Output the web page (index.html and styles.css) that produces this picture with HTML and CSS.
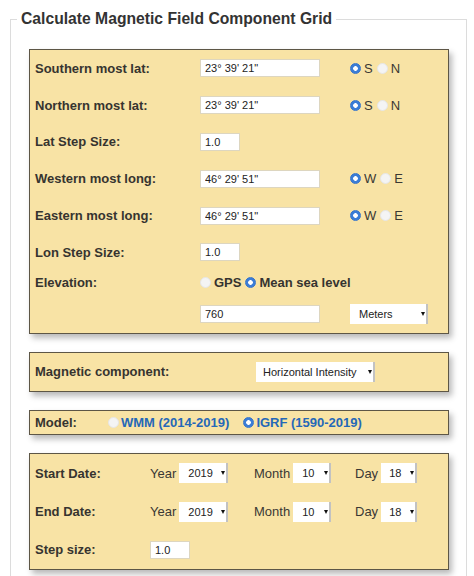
FILE: index.html
```html
<!DOCTYPE html>
<html lang="en">
<head>
<meta charset="utf-8">
<title>Calculate Magnetic Field Component Grid</title>
<link rel="stylesheet" href="styles.css">
</head>
<body>
<fieldset class="grid-form">
  <legend class="title">Calculate Magnetic Field Component Grid</legend>

  <div class="panel panel-coords">
    <div class="row">
      <span class="lbl">Southern most lat:</span>
      <input class="txt txt-wide" type="text" value="23° 39' 21&quot;">
      <span class="opts">
        <label class="opt"><input type="radio" name="slat" checked>S</label>
        <label class="opt"><input type="radio" name="slat">N</label>
      </span>
    </div>
    <div class="row">
      <span class="lbl">Northern most lat:</span>
      <input class="txt txt-wide" type="text" value="23° 39' 21&quot;">
      <span class="opts">
        <label class="opt"><input type="radio" name="nlat" checked>S</label>
        <label class="opt"><input type="radio" name="nlat">N</label>
      </span>
    </div>
    <div class="row">
      <span class="lbl">Lat Step Size:</span>
      <input class="txt txt-small" type="text" value="1.0">
    </div>
    <div class="row">
      <span class="lbl">Western most long:</span>
      <input class="txt txt-wide" type="text" value="46° 29' 51&quot;">
      <span class="opts">
        <label class="opt"><input type="radio" name="wlon" checked>W</label>
        <label class="opt"><input type="radio" name="wlon">E</label>
      </span>
    </div>
    <div class="row">
      <span class="lbl">Eastern most long:</span>
      <input class="txt txt-wide" type="text" value="46° 29' 51&quot;">
      <span class="opts">
        <label class="opt"><input type="radio" name="elon" checked>W</label>
        <label class="opt"><input type="radio" name="elon">E</label>
      </span>
    </div>
    <div class="row">
      <span class="lbl">Lon Step Size:</span>
      <input class="txt txt-small" type="text" value="1.0">
    </div>
    <div class="row row-short">
      <span class="lbl">Elevation:</span>
      <span class="opts opts-elev">
        <label class="opt opt-bold"><input type="radio" name="elev">GPS</label>
        <label class="opt opt-bold"><input type="radio" name="elev" checked>Mean sea level</label>
      </span>
    </div>
    <div class="row row-last">
      <span class="lbl"></span>
      <input class="txt txt-wide" type="text" value="760">
      <span class="sel sel-units"><select><option>Meters</option><option>Feet</option></select></span>
    </div>
  </div>

  <div class="panel">
    <div class="row row-comp">
      <span class="lbl lbl-comp">Magnetic component:</span>
      <span class="sel sel-comp"><select><option>Horizontal Intensity</option></select></span>
    </div>
  </div>

  <div class="panel">
    <div class="row row-model">
      <span class="lbl lbl-model">Model:</span>
      <span class="opts opts-model">
        <label class="opt opt-link"><input type="radio" name="model">WMM (2014-2019)</label>
        <label class="opt opt-link"><input type="radio" name="model" checked>IGRF (1590-2019)</label>
      </span>
    </div>
  </div>

  <div class="panel panel-dates">
    <div class="row row-date">
      <span class="lbl lbl-date">Start Date:</span>
      <span class="dgroup dgroup-year">Year <span class="sel sel-year"><select><option>2019</option></select></span></span>
      <span class="dgroup dgroup-month">Month <span class="sel sel-month"><select><option>10</option></select></span></span>
      <span class="dgroup dgroup-day">Day <span class="sel sel-day"><select><option>18</option></select></span></span>
    </div>
    <div class="row row-date">
      <span class="lbl lbl-date">End Date:</span>
      <span class="dgroup dgroup-year">Year <span class="sel sel-year"><select><option>2019</option></select></span></span>
      <span class="dgroup dgroup-month">Month <span class="sel sel-month"><select><option>10</option></select></span></span>
      <span class="dgroup dgroup-day">Day <span class="sel sel-day"><select><option>18</option></select></span></span>
    </div>
    <div class="row row-date">
      <span class="lbl lbl-date">Step size:</span>
      <input class="txt txt-small" type="text" value="1.0">
    </div>
  </div>
</fieldset>
</body>
</html>
```

FILE: styles.css
```css
body {
  margin: 0;
  background: #fff;
  color: #333;
  font-family: "Liberation Sans", Arial, sans-serif;
}

.grid-form {
  margin: 9px 0 0 10px;
  width: 457px;
  box-sizing: border-box;
  border: 1px solid #dcdcdc;
  padding: 20px 17px 20px 18px;
  min-width: 0;
}

.title {
  font-size: 15.7px;
  font-weight: bold;
  line-height: 20px;
  padding: 0 4px;
  margin-left: -12px;
  color: #333;
}

.panel {
  background: #f8e3a5;
  border: 1px solid #5d5646;
  box-shadow: 3px 4px 6px rgba(0, 0, 0, 0.28);
  padding: 0 5px;
  margin-bottom: 18px;
}
.panel:last-child {
  margin-bottom: 0;
}

.row {
  display: flex;
  align-items: center;
  height: 36.8px;
}
.row-short { height: 24.4px; }
.row-last { height: 37.8px; }
.row-comp { height: 38px; }
.row-model { height: 23px; }
.row-date { height: 38.4px; }

.lbl {
  width: 165px;
  flex-shrink: 0;
  font-size: 13px;
  font-weight: bold;
  color: #363430;
}
.lbl-comp { width: 221px; }
.lbl-model { width: 73px; }
.lbl-date { width: 115px; }

.txt {
  box-sizing: border-box;
  height: 18px;
  margin: 0;
  padding: 0 4px;
  border: 1px solid #ddd6c0;
  background: #fff;
  color: #222;
  font: 11px "Liberation Sans", Arial, sans-serif;
}
.txt-wide { width: 120px; }
.txt-small { width: 40px; }

.opts {
  display: flex;
  align-items: center;
  gap: 4px;
  margin-left: 30px;
  font-size: 13px;
  color: #3a3834;
}
.opts-elev {
  margin-left: 0;
  gap: 4px;
}
.opts-model {
  margin-left: 0;
  gap: 14px;
}

.opt {
  display: flex;
  align-items: center;
  gap: 3px;
}
.opt-bold {
  font-weight: bold;
  color: #363430;
}
.opt-link {
  font-weight: bold;
  color: #2568b8;
  gap: 2px;
}

.opt input {
  -webkit-appearance: none;
  appearance: none;
  box-sizing: border-box;
  width: 11px;
  height: 11px;
  margin: 0;
  border-radius: 50%;
  border: 1px solid #e6e6e6;
  background: #f4f4f4;
}
.opt input:checked {
  border: 1px solid #3574cc;
  background: radial-gradient(circle at center, #fff 0, #fff 2px, #3b7dd6 2.6px);
}

.sel {
  position: relative;
  display: inline-flex;
}
.sel select {
  -webkit-appearance: none;
  appearance: none;
  box-sizing: border-box;
  height: 20px;
  margin: 0;
  padding: 0 0 0 8px;
  border: 0;
  border-right: 2px solid #c2c2c2;
  border-radius: 0;
  background: #fff;
  color: #222;
  font: 11px "Liberation Sans", Arial, sans-serif;
}
.sel::after {
  content: "";
  position: absolute;
  right: 3px;
  top: 8px;
  border-left: 2.5px solid transparent;
  border-right: 2.5px solid transparent;
  border-top: 4px solid #111;
  pointer-events: none;
}
.sel-units {
  margin-left: 30px;
}
.sel-units select { width: 78px; padding-left: 9px; }
.sel-comp select { width: 119px; padding-left: 7px; }
.sel-year select { width: 49px; padding-left: 9px; }
.sel-month select { width: 38px; padding-left: 9px; }
.sel-day select { width: 36px; padding-left: 8px; }

.dgroup {
  display: flex;
  align-items: center;
  gap: 3px;
  font-size: 13px;
  color: #3a3834;
}
.dgroup-year { width: 104px; }
.dgroup-month { width: 101px; }
```
